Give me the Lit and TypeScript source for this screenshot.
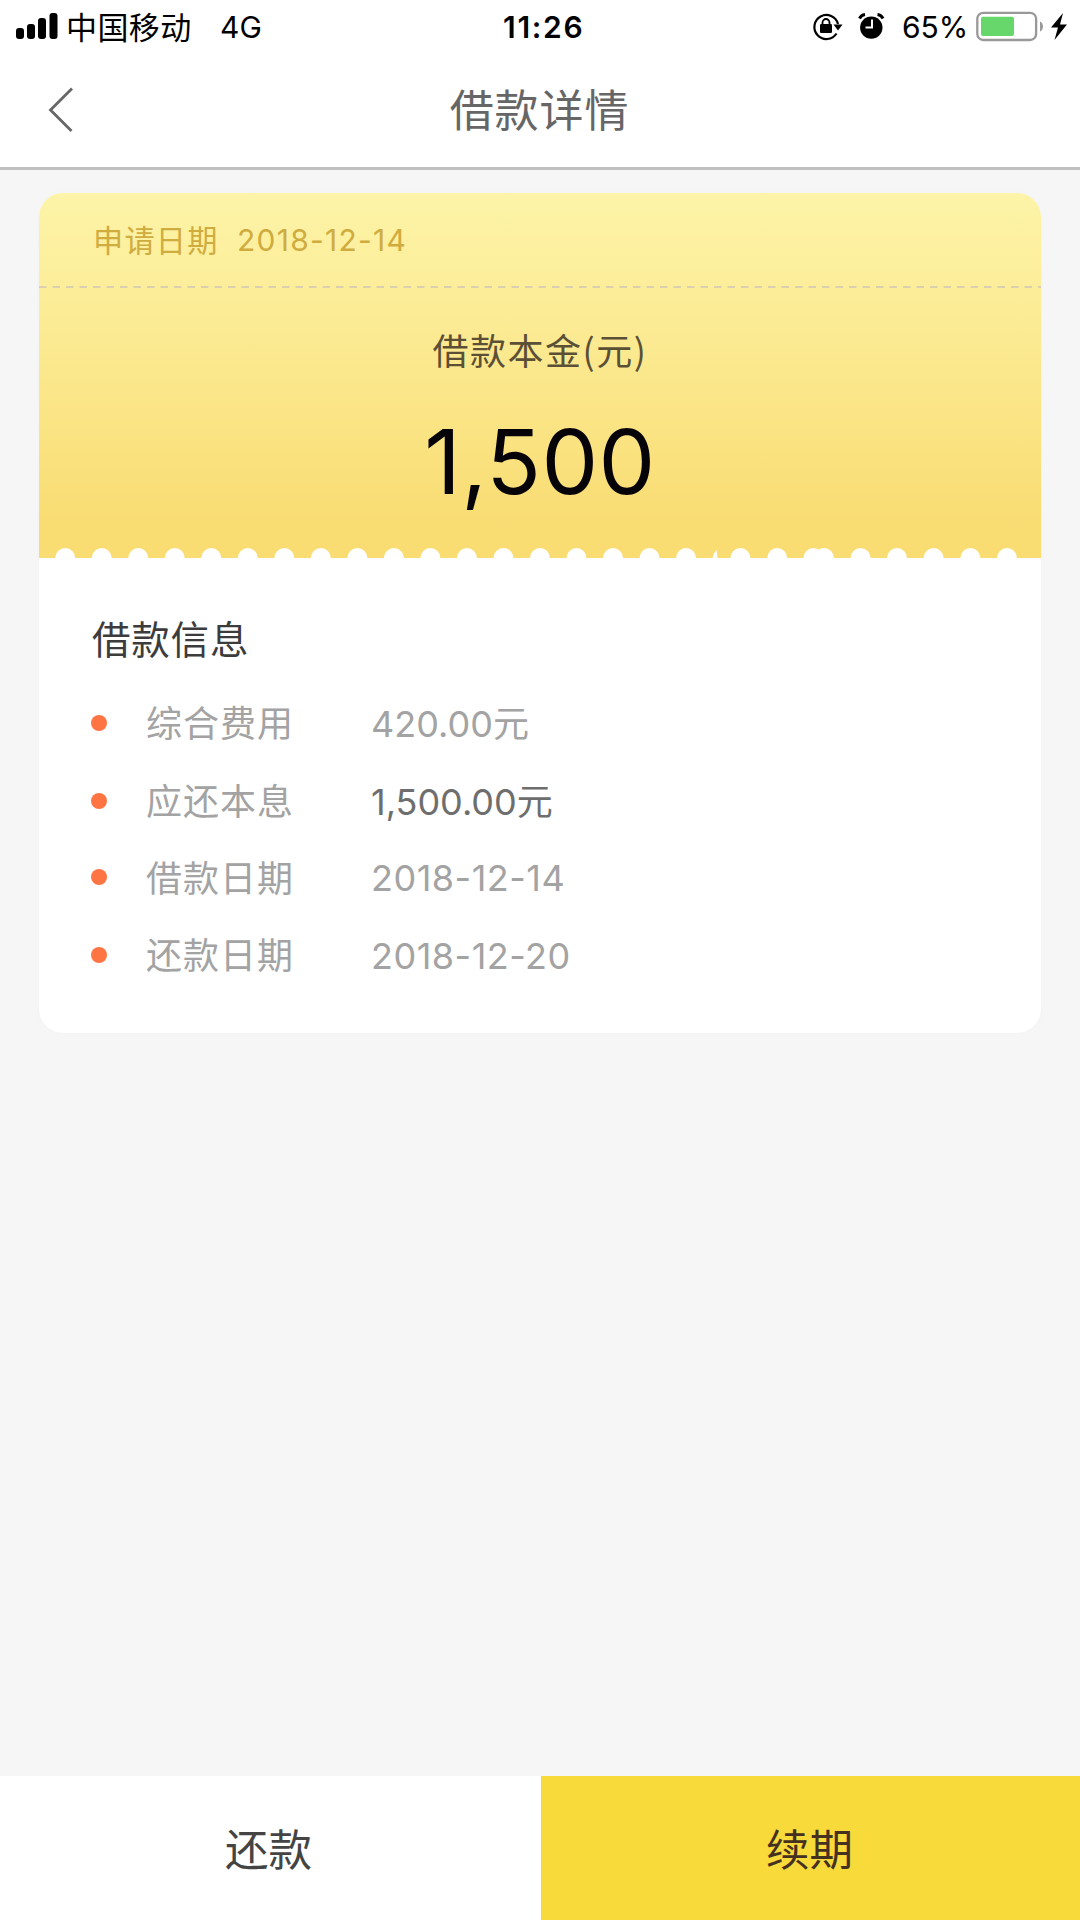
import { LitElement, html, svg, css } from "lit";
import { customElement } from "lit/decorators.js";

interface InfoRow {
  label: string;
  value: string;
  strong?: boolean;
  date?: boolean;
}

const ROWS: InfoRow[] = [
  { label: "综合费用", value: "420.00元" },
  { label: "应还本息", value: "1,500.00元", strong: true },
  { label: "借款日期", value: "2018-12-14", date: true },
  { label: "还款日期", value: "2018-12-20", date: true },
];

/* Centres of the notches cut along the bottom of the ticket. */
const NOTCHES: number[] = [
  ...Array.from({ length: 18 }, (_, i) => 26.2 + i * 36.52),
  701.4, 738.2, 774.5, 785, 821.6, 858, 894.6, 931.4, 968,
];

@customElement("status-bar")
export class StatusBar extends LitElement {
  static styles = css`
    :host { display: block; }
    .bar {
      display: flex;
      align-items: center;
      height: 54px;
      padding: 0 12px 0 16px;
      box-sizing: border-box;
      color: #000;
      font-family: Inter, "Noto Sans CJK SC", sans-serif;
      font-size: 30px;
      line-height: 54px;
      white-space: nowrap;
    }
    svg { display: block; flex: none; }
    .left { display: flex; align-items: center; width: 487px; }
    .carrier {
      margin-left: 8px;
      width: 154px;
      height: 54px;
      line-height: 52px;
      font-size: 31px;
      letter-spacing: 0.4px;
      font-family: "Noto Sans CJK SC", sans-serif;
    }
    .time { width: 90px; font-weight: 600; font-size: 30px; letter-spacing: 1.7px; }
    .right { display: flex; align-items: center; margin-left: auto; }
    .alarm { margin-left: 13px; }
    .percent { width: 74px; margin-left: 15px; }
  `;

  render() {
    return html`
      <div class="bar">
        <div class="left">
          <svg width="42" height="54" viewBox="0 0 42 54">
            <rect x="0" y="28" width="8" height="11" rx="3" />
            <rect x="11" y="24" width="8" height="15" rx="3" />
            <rect x="22" y="18" width="8" height="21" rx="3" />
            <rect x="33.5" y="13" width="8" height="26" rx="3" />
          </svg>
          <span class="carrier">中国移动</span>
          <span>4G</span>
        </div>
        <span class="time">11:26</span>
        <div class="right">
          <svg width="32" height="54" viewBox="812 0 32 54">
            <path d="M836.5 33.5A12 12 0 1 1 838 24" fill="none" stroke="#000" stroke-width="2.2" />
            <path d="M833.5 24.5h9l-4.5 6z" />
            <rect x="820" y="24" width="12" height="9" rx="1.2" />
            <path d="M822.5 25v-2.5a3.5 3.5 0 0 1 7 0V25" fill="none" stroke="#000" stroke-width="1.8" />
          </svg>
          <svg class="alarm" width="30" height="54" viewBox="858 0 30 54">
            <circle cx="872.3" cy="27.6" r="11.2" />
            <path d="M860.5 18.5a7 7 0 0 1 5.5-4M884 18.5a7 7 0 0 0-5.5-4" fill="none" stroke="#000" stroke-width="3" />
            <path d="M873 19.5v8h-6.5" fill="none" stroke="#fff" stroke-width="2" />
          </svg>
          <span class="percent">65%</span>
          <svg width="92" height="54" viewBox="976 0 92 54">
            <rect x="977.3" y="12.8" width="58.8" height="27.2" rx="6" fill="#fff" stroke="#999" stroke-width="2.3" />
            <rect x="981" y="16.7" width="33" height="19.3" rx="2" fill="#67d76b" />
            <path d="M1040 21.5c4 1.5 4 8.5 0 10z" fill="#999" />
            <path d="M1063 13l-12 14.5h7L1054.5 40 1067 24.5h-7z" />
          </svg>
        </div>
      </div>
    `;
  }
}

@customElement("loan-card")
export class LoanCard extends LitElement {
  static styles = css`
    :host { display: block; }
    .card {
      background: #fff;
      border-radius: 24px;
      overflow: hidden;
      height: 840px;
      box-shadow: 0 0 5px rgba(0, 0, 0, 0.025);
      font-family: Inter, "Noto Sans CJK SC", sans-serif;
      white-space: nowrap;
    }
    .ticket {
      display: flex;
      flex-direction: column;
      height: 365px;
      background: linear-gradient(#fdf4a8 0%, #fbe88d 48%, #f9dc72 92%, #f9dc72 100%);
    }
    .applied {
      display: flex;
      align-items: center;
      height: 93px;
      padding-left: 54px;
      font-size: 30px;
      color: #d0ab3e;
    }
    .applied-label { width: 144px; letter-spacing: 1.2px; font-size: 30.2px; padding-bottom: 2px; }
    .applied-date { letter-spacing: 1.25px; }
    .dash { display: block; height: 2px; }
    .caption {
      margin-top: 33px;
      height: 56px;
      line-height: 56px;
      text-align: center;
      font-size: 36px;
      letter-spacing: 1.5px;
      color: #5b5036;
      font-family: "Noto Sans CJK SC", sans-serif;
    }
    .amount {
      margin-top: 30px;
      height: 110px;
      line-height: 110px;
      text-align: center;
      font-size: 90px;
      letter-spacing: 0.4px;
      color: #060309;
    }
    .edge { display: block; margin-top: auto; }
    .title {
      margin: 52px 0 0 53px;
      height: 60px;
      line-height: 60px;
      font-size: 38.5px;
      letter-spacing: 0.8px;
      color: #3c3c3c;
    }
    .rows {
      display: grid;
      grid-template-rows: 79px 77px 76.5px 78px;
      margin-top: 13px;
    }
    .row {
      display: grid;
      grid-template-columns: 16px 264px 1fr;
      align-items: center;
      padding-left: 52px;
      font-size: 36px;
      color: #a3a3a3;
    }
    .dot { width: 16px; height: 16px; border-radius: 50%; background: #ff7443; }
    .label { padding: 0 0 3px 39px; letter-spacing: 1px; }
    .value { padding-bottom: 3px; }
    .date { padding: 2px 0 0; letter-spacing: 0.5px; }
    .strong { color: #6e6e6e; }
  `;

  render() {
    return html`
      <section class="card">
        <div class="ticket">
          <div class="applied">
            <span class="applied-label">申请日期</span>
            <span class="applied-date">2018-12-14</span>
          </div>
          <svg class="dash" width="1002" height="2" viewBox="0 0 1002 2">
            <path d="M0 1H1002" stroke="#dccfaf" stroke-width="1.8" stroke-dasharray="7.5 6" />
          </svg>
          <div class="caption">借款本金(元)</div>
          <div class="amount">1,500</div>
          <svg class="edge" width="1002" height="10" viewBox="0 0 1002 10">
            ${NOTCHES.map((x) => svg`<circle cx=${x} cy="10" r="10" fill="#fff" />`)}
            <path d="M673.5 10q1-5 4-8 1 5 1 8z" fill="#fff" />
          </svg>
        </div>
        <div class="title">借款信息</div>
        <div class="rows">
          ${ROWS.map(
            (r) => html`
              <div class="row">
                <span class="dot"></span>
                <span class="label">${r.label}</span>
                <span class="value ${r.strong ? "strong" : ""} ${r.date ? "date" : ""}">${r.value}</span>
              </div>
            `
          )}
        </div>
      </section>
    `;
  }
}

@customElement("app-root")
export class AppRoot extends LitElement {
  static styles = css`
    :host {
      display: flex;
      flex-direction: column;
      width: 1080px;
      height: 1920px;
      overflow: hidden;
      background: #f6f6f6;
      font-family: "Noto Sans CJK SC", sans-serif;
    }
    .top { background: #fff; border-bottom: 3px solid #bfbfbf; height: 167px; }
    .nav {
      display: grid;
      grid-template-columns: 120px 1fr 121px;
      height: 113px;
      align-items: center;
    }
    .title {
      height: 113px;
      line-height: 109px;
      text-align: center;
      font-size: 44px;
      letter-spacing: 0.9px;
      color: #666;
    }
    .main { flex: 1; padding: 23px 39px 0; }
    .actions { display: grid; grid-template-columns: 541px 539px; height: 144px; }
    .action {
      border: 0;
      padding: 0 4px 2px 0;
      font: 43.5px "Noto Sans CJK SC", sans-serif;
      color: #444;
      background: #fff;
    }
    .primary { padding-right: 2px; background: #f8da3a; color: #46301f; }
  `;

  render() {
    return html`
      <header class="top">
        <status-bar></status-bar>
        <nav class="nav">
          <svg width="120" height="113" viewBox="0 54 120 113">
            <path d="M72 88.5L50.5 110 71.5 131" fill="none" stroke="#666" stroke-width="2.8" />
          </svg>
          <span class="title">借款详情</span>
        </nav>
      </header>
      <main class="main"><loan-card></loan-card></main>
      <footer class="actions">
        <button class="action">还款</button>
        <button class="action primary">续期</button>
      </footer>
    `;
  }
}
